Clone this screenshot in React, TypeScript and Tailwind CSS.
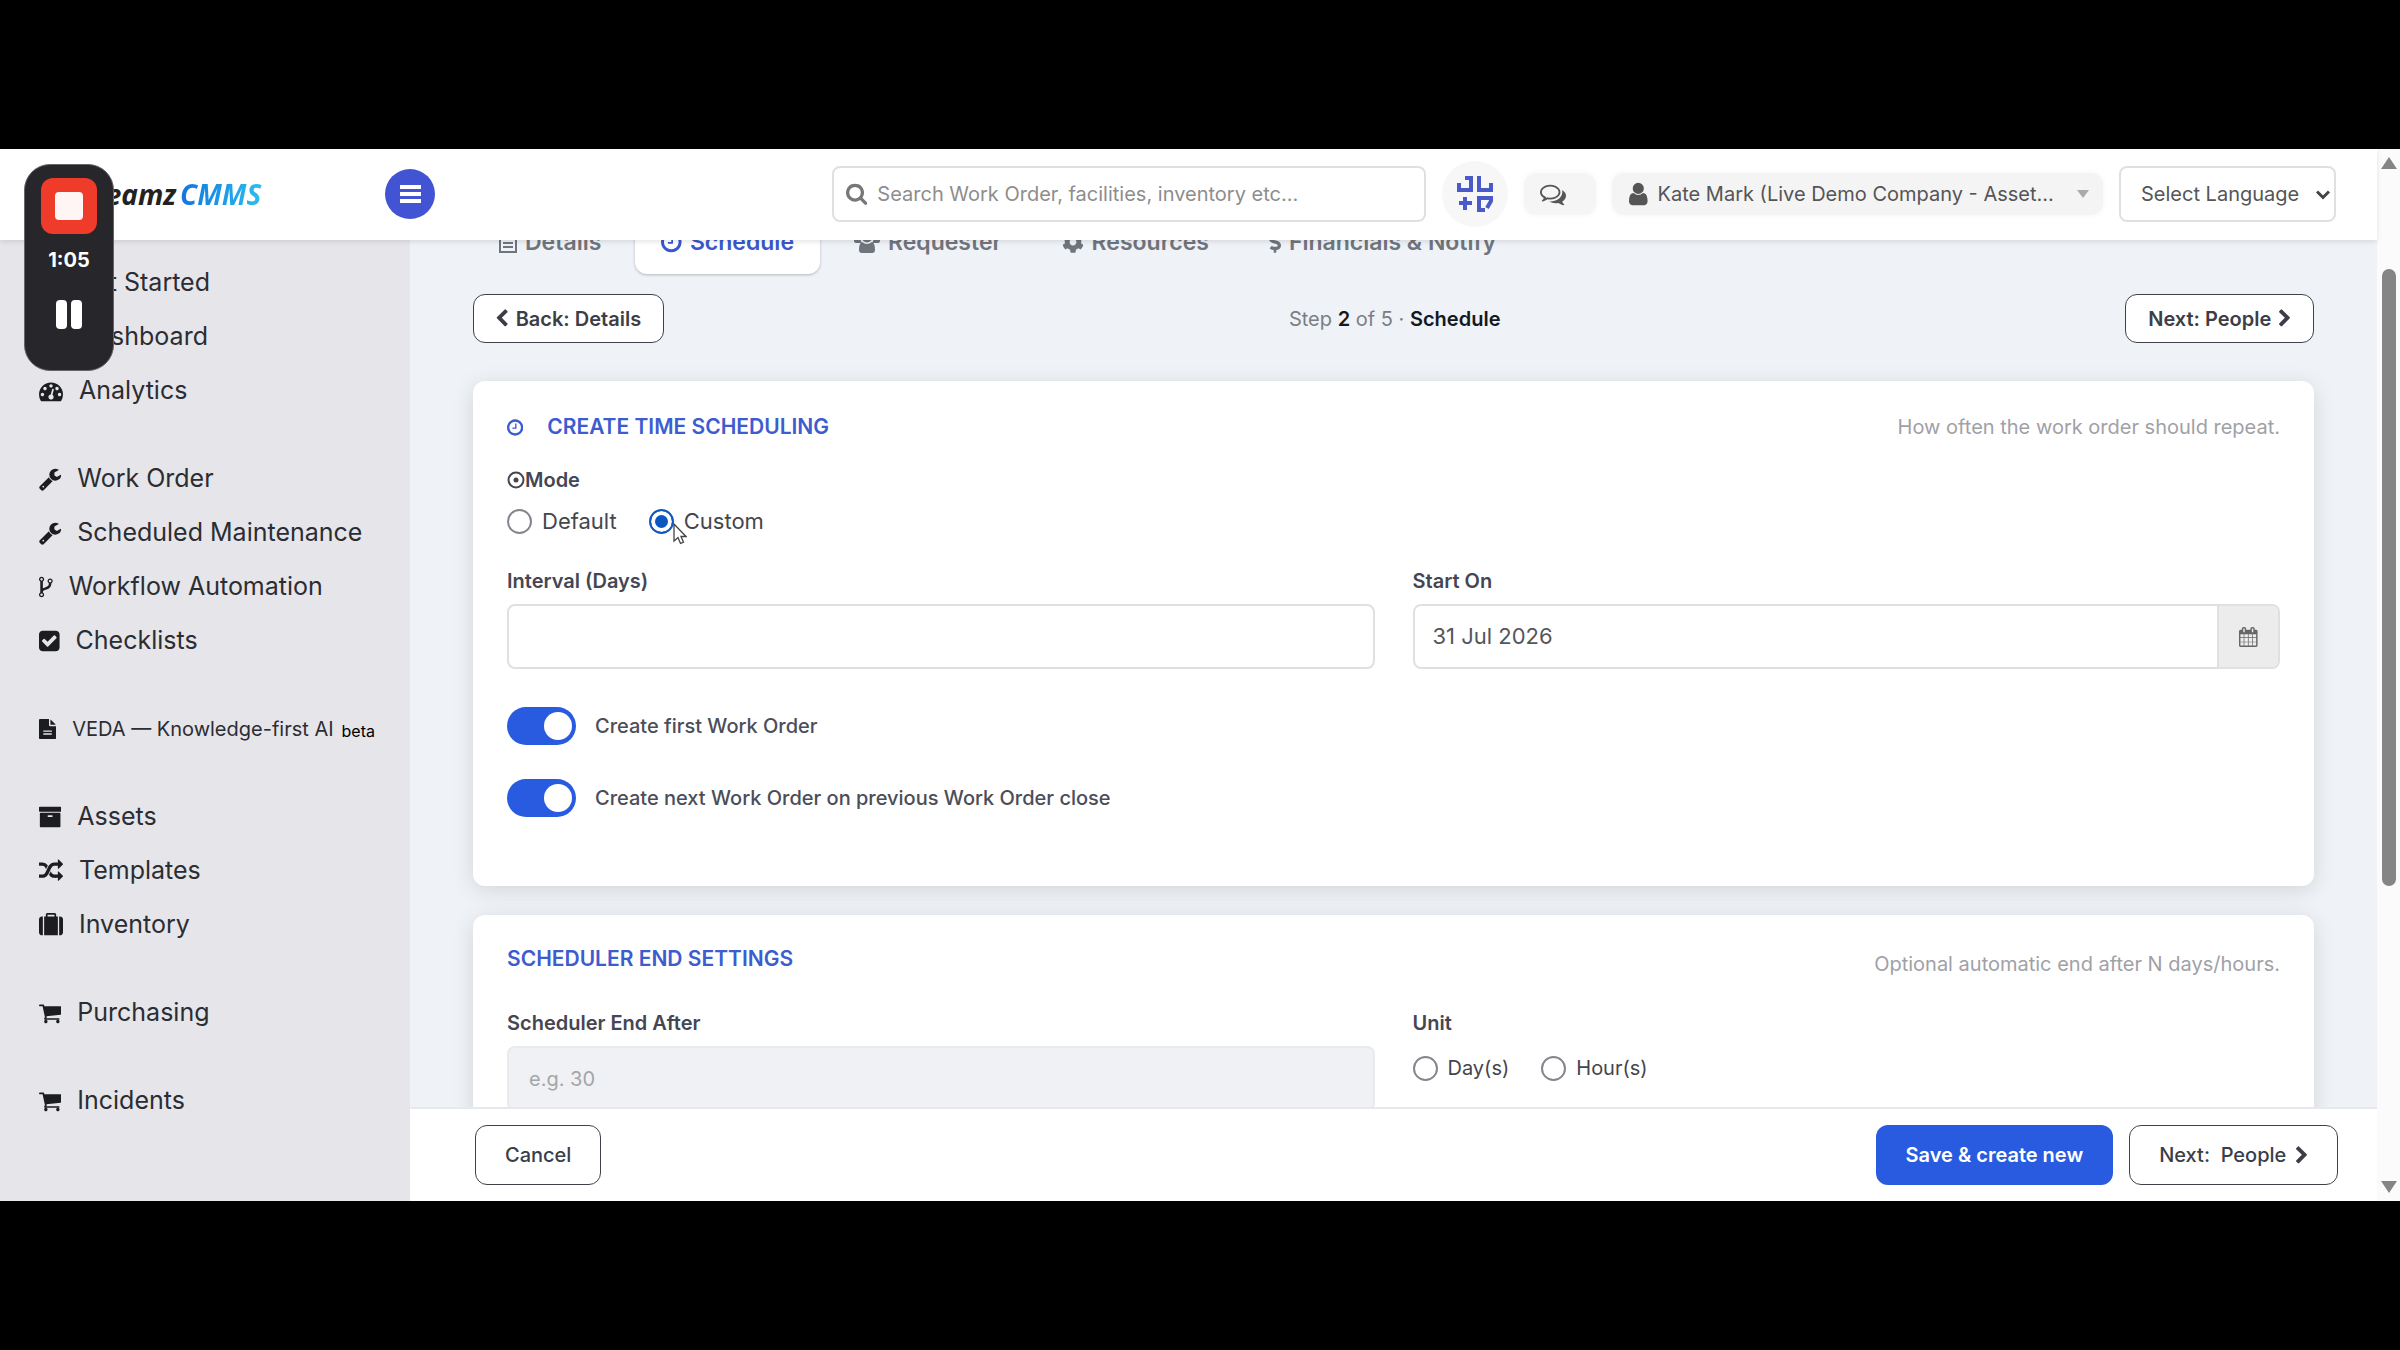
import React, { useState } from 'react';
import { FaCog, FaDollarSign } from 'react-icons/fa';

const ICONS = {
  gauge: { x: 0, w: 1792, d: 'M384 1152q0-53-37.5-90.5t-90.5-37.5-90.5 37.5-37.5 90.5 37.5 90.5 90.5 37.5 90.5-37.5 37.5-90.5zm192-448q0-53-37.5-90.5t-90.5-37.5-90.5 37.5-37.5 90.5 37.5 90.5 90.5 37.5 90.5-37.5 37.5-90.5zm428 481l101-382q6-26-7.5-48.5t-38.5-29.5-48 6.5-30 39.5l-101 382q-60 5-107 43.5t-63 98.5q-20 77 20 146t117 89 146-20 89-117q16-60-6-117t-72-91zm660-33q0-53-37.5-90.5t-90.5-37.5-90.5 37.5-37.5 90.5 37.5 90.5 90.5 37.5 90.5-37.5 37.5-90.5zm-640-640q0-53-37.5-90.5t-90.5-37.5-90.5 37.5-37.5 90.5 37.5 90.5 90.5 37.5 90.5-37.5 37.5-90.5zm448 192q0-53-37.5-90.5t-90.5-37.5-90.5 37.5-37.5 90.5 37.5 90.5 90.5 37.5 90.5-37.5 37.5-90.5zm320 448q0 261-141 483-19 29-54 29h-1402q-35 0-54-29-141-221-141-483 0-182 71-348t191-286 286-191 348-71 348 71 286 191 191 286 71 348z' },
  wrench: { x: 64, w: 1664, d: 'M448 1472q0-26-19-45t-45-19-45 19-19 45 19 45 45 19 45-19 19-45zm644-420l-682 682q-37 37-90 37-52 0-91-37l-106-108q-38-36-38-90 0-53 38-91l681-681q39 98 114.5 173.5t173.5 114.5zm634-435q0 39-23 106-47 134-164.5 217.5t-258.5 83.5q-185 0-316.5-131.5t-131.5-316.5 131.5-316.5 316.5-131.5q58 0 121.5 16.5t107.5 46.5q16 11 16 28t-16 28l-293 169v224l193 107q5-3 79-48.5t135.5-81 70.5-35.5q15 0 23.5 10t8.5 25z' },
  fork: { x: 384, w: 1024, d: 'M672 1472q0-40-28-68t-68-28-68 28-28 68 28 68 68 28 68-28 28-68zm0-1152q0-40-28-68t-68-28-68 28-28 68 28 68 68 28 68-28 28-68zm640 128q0-40-28-68t-68-28-68 28-28 68 28 68 68 28 68-28 28-68zm96 0q0 52-26 96.5t-70 69.5q-2 287-226 414-67 38-203 81-128 40-169.5 71t-41.5 100v26q44 25 70 69.5t26 96.5q0 80-56 136t-136 56-136-56-56-136q0-52 26-96.5t70-69.5v-820q-44-25-70-69.5t-26-96.5q0-80 56-136t136-56 136 56 56 136q0 52-26 96.5t-70 69.5v497q54-26 154-57 55-17 87.5-29.5t70.5-31 59-39.5 40.5-51 28-69.5 8.5-91.5q-44-25-70-69.5t-26-96.5q0-80 56-136t136-56 136 56 56 136z' },
  check: { x: 128, w: 1536, d: 'M813 1299l614-614q19-19 19-45t-19-45l-102-102q-19-19-45-19t-45 19l-467 467-211-211q-19-19-45-19t-45 19l-102 102q-19 19-19 45t19 45l358 358q19 19 45 19t45-19zm851-883v960q0 119-84.5 203.5t-203.5 84.5h-960q-119 0-203.5-84.5t-84.5-203.5v-960q0-119 84.5-203.5t203.5-84.5h960q119 0 203.5 84.5t84.5 203.5z' },
  file: { x: 128, w: 1536, d: 'M1596 476q14 14 28 36h-472v-472q22 14 36 28zm-476 164h544v1056q0 40-28 68t-68 28h-1344q-40 0-68-28t-28-68v-1600q0-40 28-68t68-28h800v544q0 40 28 68t68 28zm160 736v-64q0-14-9-23t-23-9h-704q-14 0-23 9t-9 23v64q0 14 9 23t23 9h704q14 0 23-9t9-23zm0-256v-64q0-14-9-23t-23-9h-704q-14 0-23 9t-9 23v64q0 14 9 23t23 9h704q14 0 23-9t9-23z' },
  archive: { x: 64, w: 1664, d: 'M1088 832q0-26-19-45t-45-19h-256q-26 0-45 19t-19 45 19 45 45 19h256q26 0 45-19t19-45zm576-192v960q0 26-19 45t-45 19h-1408q-26 0-45-19t-19-45v-960q0-26 19-45t45-19h1408q26 0 45 19t19 45zm64-448v256q0 26-19 45t-45 19h-1536q-26 0-45-19t-19-45v-256q0-26 19-45t45-19h1536q26 0 45 19t19 45z' },
  random: { x: 0, w: 1792, d: 'M666 481q-60 92-137 273-22-45-37-72.5t-40.5-63.5-51-56.5-63-35-81.5-14.5h-224q-14 0-23-9t-9-23v-192q0-14 9-23t23-9h224q250 0 410 225zm1126 799q0 14-9 23l-320 320q-9 9-23 9-13 0-22.5-9.5t-9.5-22.5v-192q-32 0-85 .5t-81 1-73-1-71-5-64-10.5-63-18.5-58-28.5-59-40-55-53.5-56-69.5q59-93 136-273 22 45 37 72.5t40.5 63.5 51 56.5 63 35 81.5 14.5h256v-192q0-14 9-23t23-9q12 0 24 10l319 319q9 9 9 23zm0-896q0 14-9 23l-320 320q-9 9-23 9-13 0-22.5-9.5t-9.5-22.5v-192h-256q-48 0-87 15t-69 45-51 61.5-45 77.5q-32 62-78 171-29 66-49.5 111t-54 105-64 100-74 83-90 68.5-106.5 42-128 16.5h-224q-14 0-23-9t-9-23v-192q0-14 9-23t23-9h224q48 0 87-15t69-45 51-61.5 45-77.5q32-62 78-171 29-66 49.5-111t54-105 64-100 74-83 90-68.5 106.5-42 128-16.5h256v-192q0-14 9-23t23-9q12 0 24 10l319 319q9 9 9 23z' },
  suitcase: { x: 0, w: 1792, d: 'M640 256h512v-128h-512v128zm-352 0v1408h-64q-92 0-158-66t-66-158v-960q0-92 66-158t158-66h64zm1120 0v1408h-1024v-1408h128v-160q0-40 28-68t68-28h576q40 0 68 28t28 68v160h128zm384 224v960q0 92-66 158t-158 66h-64v-1408h64q92 0 158 66t66 158z' },
  cart: { x: 64, w: 1664, d: 'M704 1536q0 52-38 90t-90 38-90-38-38-90 38-90 90-38 90 38 38 90zm896 0q0 52-38 90t-90 38-90-38-38-90 38-90 90-38 90 38 38 90zm128-1088v512q0 24-16.5 42.5t-40.5 21.5l-1044 122q13 60 13 70 0 16-24 64h920q26 0 45 19t19 45-19 45-45 19h-1024q-26 0-45-19t-19-45q0-11 8-31.5t16-36 21.5-40 15.5-29.5l-177-823h-204q-26 0-45-19t-19-45 19-45 45-19h256q16 0 28.5 6.5t19.5 15.5 13 24.5 8 26 5.5 29.5 4.5 26h1201q26 0 45 19t19 45z' },
  user: { x: 256, w: 1280, d: 'M1536 1399q0 109-62.5 187t-150.5 78h-854q-88 0-150.5-78t-62.5-187q0-85 8.5-160.5t31.5-152 58.5-131 94-89 134.5-34.5q131 128 313 128t313-128q76 0 134.5 34.5t94 89 58.5 131 31.5 152 8.5 160.5zm-256-887q0 159-112.5 271.5t-271.5 112.5-271.5-112.5-112.5-271.5 112.5-271.5 271.5-112.5 271.5 112.5 112.5 271.5z' },
  search: { x: 64, w: 1664, d: 'M1216 832q0-185-131.5-316.5t-316.5-131.5-316.5 131.5-131.5 316.5 131.5 316.5 316.5 131.5 316.5-131.5 131.5-316.5zm512 832q0 52-38 90t-90 38q-54 0-90-38l-343-342q-179 124-399 124-143 0-273.5-55.5t-225-150-150-225-55.5-273.5 55.5-273.5 150-225 225-150 273.5-55.5 273.5 55.5 225 150 150 225 55.5 273.5q0 220-124 399l343 343q37 37 37 90z' },
  clock: { x: 128, w: 1536, d: 'M1024 544v448q0 14-9 23t-23 9h-320q-14 0-23-9t-9-23v-64q0-14 9-23t23-9h224v-352q0-14 9-23t23-9h64q14 0 23 9t9 23zm416 352q0-148-73-273t-198-198-273-73-273 73-198 198-73 273 73 273 198 198 273 73 273-73 198-198 73-273zm224 0q0 209-103 385.5t-279.5 279.5-385.5 103-385.5-103-279.5-279.5-103-385.5 103-385.5 279.5-279.5 385.5-103 385.5 103 279.5 279.5 103 385.5z' },
  comments: { x: 0, w: 1792, d: 'M704 384q-153 0-286 52t-211.5 141-78.5 191q0 82 53 158t149 132l97 56-35 84q34-20 62-39l44-31 53 10q78 14 153 14 153 0 286-52t211.5-141 78.5-191-78.5-191-211.5-141-286-52zm0-128q191 0 353.5 68.5t256.5 186.5 94 257-94 257-256.5 186.5-353.5 68.5q-86 0-176-16-124 88-278 128-36 9-86 16h-3q-11 0-20.5-8t-11.5-21q-1-3-1-6.5t.5-6.5 2-6l2.5-5 3.5-5.5 4-5 4.5-5 4-4.5q5-6 23-25t26-29.5 22.5-29 25-38.5 20.5-44q-124-72-195-177t-71-224q0-139 94-257t256.5-186.5 353.5-68.5zm822 1169q10 24 20.5 44t25 38.5 22.5 29 26 29.5 23 25q1 1 4 4.5t4.5 5 4 5 3.5 5.5l2.5 5 2 6 .5 6.5-1 6.5q-3 14-13 22t-22 7q-50-7-86-16-154-40-278-128-90 16-176 16-271 0-472-132 58 4 88 4 161 0 309-45t264-129q125-92 192-212t67-254q0-77-23-152 129 71 204 178t75 230q0 120-71 224.5t-195 176.5z' },
  calendar: { x: 64, w: 1664, d: 'M192 1664h288v-288h-288v288zm352 0h320v-288h-320v288zm-352-352h288v-320h-288v320zm352 0h320v-320h-320v320zm-352-384h288v-288h-288v288zm736 736h320v-288h-320v288zm-384-736h320v-288h-320v288zm768 736h288v-288h-288v288zm-384-352h320v-320h-320v320zm-352-864v-288q0-13-9.5-22.5t-22.5-9.5h-64q-13 0-22.5 9.5t-9.5 22.5v288q0 13 9.5 22.5t22.5 9.5h64q13 0 22.5-9.5t9.5-22.5zm736 864h288v-320h-288v320zm-384-384h320v-288h-320v288zm384 0h288v-288h-288v288zm32-480v-288q0-13-9.5-22.5t-22.5-9.5h-64q-13 0-22.5 9.5t-9.5 22.5v288q0 13 9.5 22.5t22.5 9.5h64q13 0 22.5-9.5t9.5-22.5zm384-64v1280q0 52-38 90t-90 38h-1408q-52 0-90-38t-38-90v-1280q0-52 38-90t90-38h128v-96q0-66 47-113t113-47h64q66 0 113 47t47 113v96h384v-96q0-66 47-113t113-47h64q66 0 113 47t47 113v96h128q52 0 90 38t38 90z' },
  left: { x: 346, w: 1100, d: 'M1427 301l-531 531 531 531q19 19 19 45t-19 45l-166 166q-19 19-45 19t-45-19l-742-742q-19-19-19-45t19-45l742-742q19-19 45-19t45 19l166 166q19 19 19 45t-19 45z' },
  right: { x: 346, w: 1100, d: 'M1363 877l-742 742q-19 19-45 19t-45-19l-166-166q-19-19-19-45t19-45l531-531-531-531q-19-19-19-45t19-45l166-166q19-19 45-19t45 19l742 742q19 19 19 45t-19 45z' },
};

type IconName = keyof typeof ICONS;

const Icon: React.FC<{ name: IconName; className?: string }> = ({ name, className }) => {
  const { x, w, d } = ICONS[name];
  return (
    <svg viewBox={`${x} 0 ${w} 1792`} fill="currentColor" className={`w-auto shrink-0 ${className ?? 'h-6'}`} aria-hidden="true">
      <path d={d} />
    </svg>
  );
};

const MENU: { label: string; icon: IconName; small?: boolean }[][] = [
  [
    { label: 'Get Started', icon: 'check' },
    { label: 'Dashboard', icon: 'gauge' },
    { label: 'Analytics', icon: 'gauge' },
  ],
  [
    { label: 'Work Order', icon: 'wrench' },
    { label: 'Scheduled Maintenance', icon: 'wrench' },
    { label: 'Workflow Automation', icon: 'fork' },
    { label: 'Checklists', icon: 'check' },
  ],
  [{ label: 'VEDA — Knowledge-first AI', icon: 'file', small: true }],
  [
    { label: 'Assets', icon: 'archive' },
    { label: 'Templates', icon: 'random' },
    { label: 'Inventory', icon: 'suitcase' },
  ],
  [{ label: 'Purchasing', icon: 'cart' }],
  [{ label: 'Incidents', icon: 'cart' }],
];

const Header: React.FC = () => (
  <header className="relative z-10 flex h-[91px] shrink-0 items-center justify-between bg-white pr-[41px] pb-0.5 shadow-[0_2px_5px_rgba(0,0,0,0.1)]">
    <div className="flex items-center">
      <a href="#home" className="flex w-[385px] items-baseline gap-1 pl-[75px] font-['Open_Sans',sans-serif] text-[28px] font-bold italic">
        <span className="text-[#222]">Dreamz</span>
        <span className="bg-linear-to-r from-[#1673e0] to-[#2fc0ee] bg-clip-text pr-1 text-transparent">CMMS</span>
      </a>
      <button aria-label="Toggle menu" className="flex size-[50px] items-center justify-center rounded-full bg-[#4254d4]">
        <svg viewBox="0 0 21 18" className="h-[18px] w-[21px]" fill="#fff">
          <path d="M0 0h21v4H0zM0 7h21v4H0zM0 14h21v4H0z" />
        </svg>
      </button>
    </div>
    <div className="flex items-center gap-4 text-[#555]">
      <label className="flex h-14 w-[594px] items-center gap-2.5 rounded-lg border-2 border-[#e0e0e0] px-3 text-[#777]">
        <Icon name="search" className="h-[23px]" />
        <input
          type="search"
          aria-label="Search"
          placeholder="Search Work Order, facilities, inventory etc..."
          className="min-w-0 flex-1 text-xl outline-none placeholder:text-[#8d8d8d]"
        />
      </label>
      <button aria-label="Scan code" className="flex size-[66px] items-center justify-center rounded-full bg-[#f7f7f8]">
        <svg viewBox="0 0 36 36" className="h-[38px] w-9" fill="none" stroke="#4a5ac8" strokeWidth="4">
          <path d="M8 2H14V14H2V7M22 0V14H34V7M2 27H15M8 21V34M28 34H22V22H34V25L30 32" />
        </svg>
      </button>
      <button aria-label="Messages" className="flex h-[42px] w-[72px] items-center rounded-xl bg-[#f5f5f5] pl-4 shadow-[0_0_6px_#f5f5f5]">
        <Icon name="comments" className="h-[26px]" />
      </button>
      <button className="flex h-[42px] w-[491px] items-center gap-2.5 rounded-xl bg-[#f4f4f4] pr-3.5 pl-[17px] text-xl shadow-[0_0_6px_#f4f4f4]">
        <Icon name="user" className="h-[26px]" />
        <span className="flex-1 text-left whitespace-nowrap">Kate Mark (Live Demo Company - Asset...</span>
        <svg viewBox="0 0 12 8" className="h-2 w-3" fill="#aaa"><path d="M0 0h12L6 8z" /></svg>
      </button>
      <div className="relative">
        <select aria-label="Select Language" className="h-14 w-[217px] appearance-none rounded-lg border-2 border-[#e0e0e0] bg-white pl-5 text-xl">
          <option>Select Language</option>
        </select>
        <svg viewBox="0 0 14 10" className="pointer-events-none absolute top-6 right-1.5 h-2.5 w-3.5" fill="none" stroke="#444" strokeWidth="3">
          <path d="M1 1.5l6 6 6-6" />
        </svg>
      </div>
    </div>
  </header>
);

const Sidebar: React.FC = () => (
  <nav className="flex w-[410px] shrink-0 flex-col gap-[34px] overflow-hidden bg-[#e6e5ea] pt-4 pl-[39px] text-[#2b2d33]">
    {MENU.map((group) => (
      <ul key={group[0].label}>
        {group.map((item) => (
          <li key={item.label}>
            <a href="#menu" className={`flex h-[54px] items-center gap-4 whitespace-nowrap ${item.small ? 'text-xl' : 'text-[25px]'}`}>
              <Icon name={item.icon} className={item.small ? 'h-5 text-[#1c1d20]' : 'h-6 text-[#1c1d20]'} />
              <span>{item.label}</span>
              {item.small && <span className="-ml-2 pt-1 text-base text-black">beta</span>}
            </a>
          </li>
        ))}
      </ul>
    ))}
  </nav>
);

const Tabs: React.FC = () => {
  const base = 'flex h-16 items-center gap-2 rounded-xl px-[26px] whitespace-nowrap';
  return (
    <div role="tablist" className="-mt-[30px] flex gap-2 text-[23px] font-semibold text-[#70757d]">
      <button role="tab" className={base}>
        <svg viewBox="0 0 18 22" className="h-[22px] w-[18px]" fill="none" stroke="currentColor" strokeWidth="2">
          <path d="M1 1h16v20H1zM4 7h10M4 12h10M4 16h10" />
        </svg>
        Details
      </button>
      <button role="tab" aria-selected="true" className={`${base} bg-white text-[#3a57cf] shadow-[0_1px_3px_rgba(0,0,0,0.25)]`}>
        <Icon name="clock" />
        Schedule
      </button>
      <button role="tab" className={base}>
        <svg viewBox="0 0 26 24" className="h-6 w-[26px]" fill="currentColor">
          <circle cx="5" cy="5" r="3.500" />
          <circle cx="21" cy="5" r="3.500" />
          <circle cx="13" cy="7.500" r="5" />
          <path d="M0 10q0-2 2-2h5q-1 3 1 5H2q-2 0-2-2zM26 10q0-2-2-2h-5q1 3-1 5h6q2 0 2-2z" />
          <path d="M8 12q5 4 10 0 3 1 3 8 0 3-3 3H8q-3 0-3-3 0-7 3-8z" />
        </svg>
        Requester
      </button>
      <button role="tab" className={base}><FaCog className="size-[22px]" />Resources</button>
      <button role="tab" className={base}><FaDollarSign className="h-[22px] w-3" />Financials &amp; Notify</button>
    </div>
  );
};

interface RadioProps {
  name: string;
  label: string;
  checked: boolean;
  onPick: () => void;
  large?: boolean;
}

const Radio: React.FC<RadioProps> = ({ name, label, checked, onPick, large }) => (
  <label className={`flex h-7 items-center gap-2.5 text-[#44464e] ${large ? 'text-[22px]' : 'text-xl'}`}>
    <input
      type="radio"
      name={name}
      checked={checked}
      onChange={onPick}
      className="size-[25px] appearance-none rounded-full border-2 border-[#83868c] bg-white checked:border-[#1259bf] checked:bg-[#0b57c0] checked:shadow-[inset_0_0_0_4px_#fff]"
    />
    {label}
  </label>
);

const Toggle: React.FC<{ label: string }> = ({ label }) => {
  const [on, setOn] = useState(true);
  return (
    <label className="flex items-center gap-[19px] text-xl font-medium text-[#4b4d58]">
      <input
        type="checkbox"
        role="switch"
        checked={on}
        onChange={() => setOn(!on)}
        className="flex h-[38px] w-[69px] appearance-none items-center rounded-full bg-gray-300 px-1 before:size-7 before:rounded-full before:bg-white checked:justify-end checked:bg-[#295be0]"
      />
      {label}
    </label>
  );
};

const CARD = 'rounded-xl bg-white px-[34px] shadow-[0_4px_22px_rgba(0,0,0,0.12)]';
const HEADING = 'flex items-center gap-6 text-[21px] leading-7 font-semibold text-[#3c5ccf]';
const LABEL = 'block text-xl leading-7 font-semibold text-[#444654]';
const OUTLINE = 'flex items-center rounded-xl border border-[#3f4249] bg-white text-xl text-[#3b3e46]';

const ScheduleCard: React.FC = () => {
  const [mode, setMode] = useState('custom');
  return (
    <section className={`${CARD} mt-[38px] pt-8 pb-[69px]`}>
      <div className="flex items-center justify-between leading-7">
        <h2 className={HEADING}>
          <Icon name="clock" className="h-[19px]" />
          CREATE TIME SCHEDULING
        </h2>
        <p className="text-xl text-[#a0a1a6]">How often the work order should repeat.</p>
      </div>
      <fieldset className="mt-[25px]">
        <legend className="flex items-center text-xl leading-7 font-semibold text-[#444654]">
          <svg viewBox="0 0 18 18" className="size-[18px]" fill="none" stroke="currentColor" strokeWidth="2">
            <circle cx="9" cy="9" r="7.5" />
            <circle cx="9" cy="9" r="2.5" fill="currentColor" stroke="none" />
          </svg>
          Mode
        </legend>
        <div className="mt-[13px] flex gap-8">
          <Radio large name="mode" label="Default" checked={mode === 'default'} onPick={() => setMode('default')} />
          <div className="relative">
            <Radio large name="mode" label="Custom" checked={mode === 'custom'} onPick={() => setMode('custom')} />
            {/* Mouse pointer */}
            <svg viewBox="0 0 14 22" className="absolute top-4 left-6 h-[22px] w-3.5" fill="#fff" stroke="#444" strokeWidth="1.3">
              <path d="M1 1v17l4-3.500 2.500 6 3-1.300-2.500-5.700h5z" />
            </svg>
          </div>
        </div>
      </fieldset>
      <div className="mt-8 grid grid-cols-2 gap-[38px]">
        <div>
          <label htmlFor="interval" className={LABEL}>Interval (Days)</label>
          <input id="interval" type="text" className="mt-[9px] h-[65px] w-full rounded-lg border-2 border-[#e0e0e0] px-5 text-xl" />
        </div>
        <div>
          <label htmlFor="start" className={LABEL}>Start On</label>
          <div className="mt-[9px] flex h-[65px] overflow-hidden rounded-lg border-2 border-[#e0e0e0]">
            <input id="start" type="text" defaultValue="31 Jul 2026" className="min-w-0 flex-1 px-[18px] text-[22px] text-[#55565c]" />
            <button aria-label="Open calendar" className="flex w-[61px] items-center justify-center border-l-2 border-[#e0e0e0] bg-[#ececec] text-[#666]">
              <Icon name="calendar" className="h-5" />
            </button>
          </div>
        </div>
      </div>
      <div className="mt-[38px] flex flex-col items-start gap-[34px]">
        <Toggle label="Create first Work Order" />
        <Toggle label="Create next Work Order on previous Work Order close" />
      </div>
    </section>
  );
};

const EndCard: React.FC = () => {
  const [unit, setUnit] = useState('');
  return (
    <section className={`${CARD} mt-[29px] pt-[30px] pb-10`}>
      <div className="flex items-start justify-between">
        <h2 className={HEADING}>SCHEDULER END SETTINGS</h2>
        <p className="text-xl leading-[38px] text-[#a0a1a6]">Optional automatic end after N days/hours.</p>
      </div>
      <div className="mt-[26px] grid grid-cols-2 gap-[38px]">
        <div>
          <label htmlFor="end-after" className={LABEL}>Scheduler End After</label>
          <input
            id="end-after"
            type="text"
            placeholder="e.g. 30"
            className="mt-[9px] h-[65px] w-full rounded-lg border-2 border-[#e9eaec] bg-[#f0f1f4] px-5 text-xl placeholder:text-[#a3a5a9]"
          />
        </div>
        <fieldset>
          <legend className={LABEL}>Unit</legend>
          <div className="mt-[17px] flex gap-8">
            <Radio name="unit" label="Day(s)" checked={unit === 'day'} onPick={() => setUnit('day')} />
            <Radio name="unit" label="Hour(s)" checked={unit === 'hour'} onPick={() => setUnit('hour')} />
          </div>
        </fieldset>
      </div>
    </section>
  );
};

const Recorder: React.FC = () => (
  <div className="absolute top-[15px] left-6 z-20 flex h-[207px] w-[90px] flex-col items-center rounded-[26px] border border-[#666] bg-[#26262b] pt-[13px]">
    <button aria-label="Stop recording" className="flex size-14 items-center justify-center rounded-xl bg-[#ee3b2a]">
      <span className="size-7 rounded bg-[#fff5f5]" />
    </button>
    <span className="mt-3 text-xl leading-7 font-bold text-white">1:05</span>
    <button aria-label="Pause recording" className="mt-[26px] flex gap-1">
      <span className="h-[29px] w-[11px] rounded bg-white" />
      <span className="h-[29px] w-[11px] rounded bg-white" />
    </button>
  </div>
);

const App: React.FC = () => (
  <div className="flex h-screen flex-col bg-black py-[149px] font-[Inter,sans-serif]">
    <div className="relative flex min-h-0 flex-1 bg-white">
      <Recorder />
      <div className="flex min-w-0 flex-1 flex-col">
        <Header />
        <div className="flex min-h-0 flex-1">
          <Sidebar />
          <div className="flex min-w-0 flex-1 flex-col">
            <main className="min-h-0 flex-1 overflow-hidden bg-[#eff2f7] px-[63px]">
              <Tabs />
              <div className="mt-5 flex items-center justify-between">
                <button className={`${OUTLINE} h-[49px] gap-2 px-[22px] font-semibold`}>
                  <Icon name="left" className="h-[19px]" />
                  Back: Details
                </button>
                <p className="text-xl text-[#7b7e85]">
                  Step <strong className="font-semibold text-[#16181d]">2</strong> of 5 · <strong className="font-semibold text-[#16181d]">Schedule</strong>
                </p>
                <button className={`${OUTLINE} h-[49px] gap-2 px-[22px] font-semibold`}>
                  Next: People
                  <Icon name="right" className="h-[19px]" />
                </button>
              </div>
              <ScheduleCard />
              <EndCard />
            </main>
            <footer className="flex h-[94px] shrink-0 items-center border-t-2 border-[#e6e8ee] bg-white pr-[39px] pl-[65px]">
              <button className={`${OUTLINE} h-[60px] px-[29px] font-medium`}>Cancel</button>
              <button className="mr-4 ml-auto h-[60px] rounded-xl bg-[#295be0] px-[30px] text-xl font-semibold text-white">Save &amp; create new</button>
              <button className={`${OUTLINE} h-[60px] gap-2.5 px-[29px] font-medium`}>
                <span>Next:&nbsp; People</span>
                <Icon name="right" className="h-[19px]" />
              </button>
            </footer>
          </div>
        </div>
      </div>
      <div className="flex w-[23px] shrink-0 flex-col items-center bg-[#fbfbfc] pt-2 pb-2 text-[#858585]">
        <svg viewBox="0 0 16 12" className="h-3 w-4" fill="currentColor"><path d="M8 0l8 12H0z" /></svg>
        <div className="my-[100px] w-3.5 flex-1">
          <div className="h-[76%] rounded-full bg-current" />
        </div>
        <svg viewBox="0 0 16 12" className="h-3 w-4" fill="currentColor"><path d="M0 0h16L8 12z" /></svg>
      </div>
    </div>
  </div>
);

export default App;
